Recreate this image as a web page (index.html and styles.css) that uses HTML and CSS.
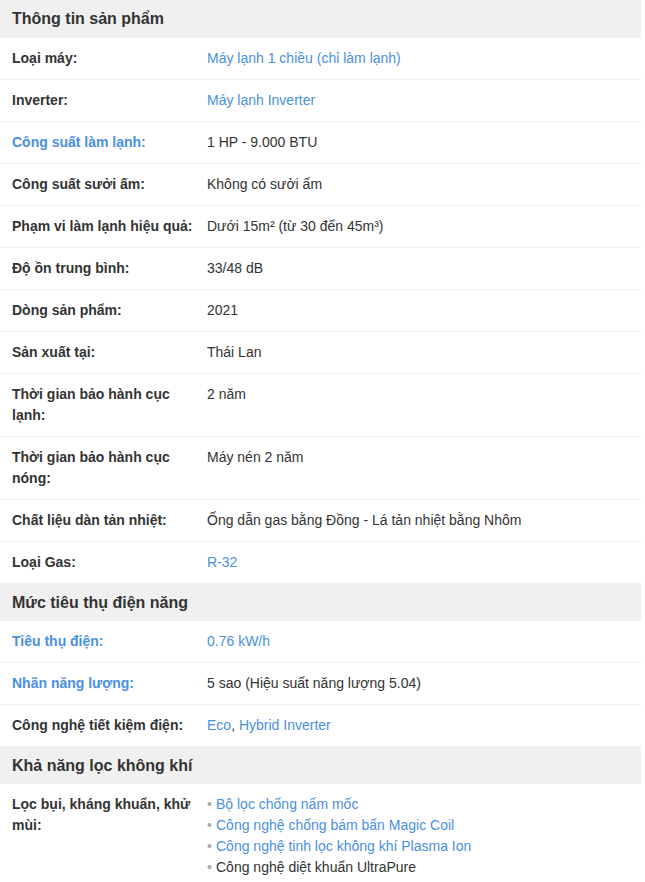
FILE: index.html
```html
<!DOCTYPE html>
<html lang="vi">
<head>
<meta charset="utf-8">
<title>Thông số kỹ thuật</title>
<link rel="stylesheet" href="styles.css">
</head>
<body>
<div class="specs">
  <section class="group">
    <h3 class="group-title">Thông tin sản phẩm</h3>
    <div class="row"><div class="label">Loại máy:</div><div class="value"><a class="link" href="#">Máy lạnh 1 chiều (chỉ làm lạnh)</a></div></div>
    <div class="row"><div class="label">Inverter:</div><div class="value"><a class="link" href="#">Máy lạnh Inverter</a></div></div>
    <div class="row"><div class="label"><a class="link" href="#">Công suất làm lạnh:</a></div><div class="value">1 HP - 9.000 BTU</div></div>
    <div class="row"><div class="label">Công suất sưởi ấm:</div><div class="value">Không có sưởi ấm</div></div>
    <div class="row"><div class="label">Phạm vi làm lạnh hiệu quả:</div><div class="value">Dưới 15m² (từ 30 đến 45m³)</div></div>
    <div class="row"><div class="label">Độ ồn trung bình:</div><div class="value">33/48 dB</div></div>
    <div class="row"><div class="label">Dòng sản phẩm:</div><div class="value">2021</div></div>
    <div class="row"><div class="label">Sản xuất tại:</div><div class="value">Thái Lan</div></div>
    <div class="row"><div class="label">Thời gian bảo hành cục lạnh:</div><div class="value">2 năm</div></div>
    <div class="row"><div class="label">Thời gian bảo hành cục nóng:</div><div class="value">Máy nén 2 năm</div></div>
    <div class="row"><div class="label">Chất liệu dàn tản nhiệt:</div><div class="value">Ống dẫn gas bằng Đồng - Lá tản nhiệt bằng Nhôm</div></div>
    <div class="row"><div class="label">Loại Gas:</div><div class="value"><a class="link" href="#">R-32</a></div></div>
  </section>
  <section class="group">
    <h3 class="group-title">Mức tiêu thụ điện năng</h3>
    <div class="row"><div class="label"><a class="link" href="#">Tiêu thụ điện:</a></div><div class="value"><a class="link" href="#">0.76 kW/h</a></div></div>
    <div class="row"><div class="label"><a class="link" href="#">Nhãn năng lượng:</a></div><div class="value">5 sao (Hiệu suất năng lượng 5.04)</div></div>
    <div class="row"><div class="label">Công nghệ tiết kiệm điện:</div><div class="value"><a class="link" href="#">Eco</a>, <a class="link" href="#">Hybrid Inverter</a></div></div>
  </section>
  <section class="group">
    <h3 class="group-title">Khả năng lọc không khí</h3>
    <div class="row"><div class="label">Lọc bụi, kháng khuẩn, khử mùi:</div>
      <div class="value">
        <ul class="bullets">
          <li><a class="link" href="#">Bộ lọc chống nấm mốc</a></li>
          <li><a class="link" href="#">Công nghệ chống bám bẩn Magic Coil</a></li>
          <li><a class="link" href="#">Công nghệ tinh lọc không khí Plasma Ion</a></li>
          <li>Công nghệ diệt khuẩn UltraPure</li>
        </ul>
      </div>
    </div>
  </section>
</div>
</body>
</html>
```
FILE: styles.css
```css
html, body {
  margin: 0;
  padding: 0;
  background: #fff;
}
body {
  font-family: "Liberation Sans", Arial, sans-serif;
  font-size: 14px;
  line-height: 21px;
  color: #333;
}
.specs {
  width: 641px;
}
.group-title {
  margin: 0;
  background: #f0f0f0;
  padding: 8px 12px;
  font-size: 16px;
  line-height: 21px;
  font-weight: bold;
  color: #333;
}
.group:first-child .group-title {
  padding-bottom: 9px;
}
.row {
  display: grid;
  grid-template-columns: 207px 1fr;
  padding: 10px 0;
  border-bottom: 1px solid #eee;
}
.label {
  padding: 0 0 0 12px;
  font-weight: bold;
}
.value {
  padding-right: 12px;
}
.link {
  color: #4a90e2;
  text-decoration: none;
}
.bullets {
  list-style: none;
  margin: 0;
  padding: 0;
}
.bullets li::before {
  content: "\2022";
  display: inline-block;
  width: 9px;
  color: #aaa;
}
```
